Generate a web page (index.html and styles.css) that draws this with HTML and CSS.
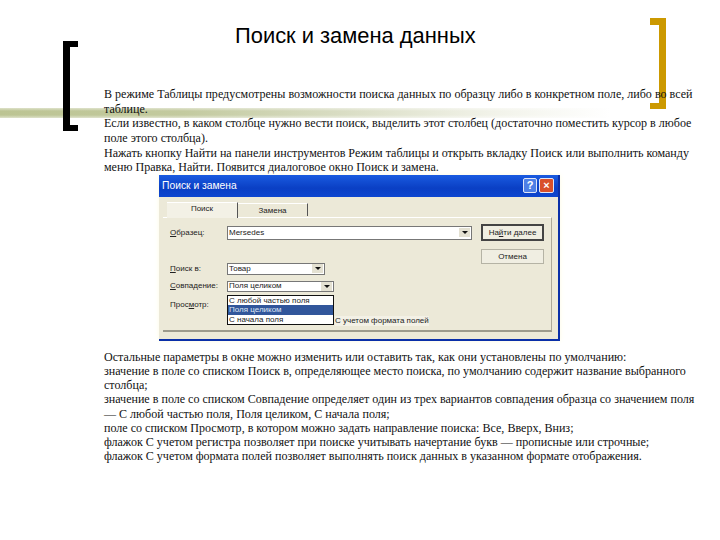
FILE: index.html
```
<!DOCTYPE html>
<html lang="ru">
<head>
<meta charset="utf-8">
<title>Поиск и замена данных</title>
<link rel="stylesheet" href="styles.css">
</head>
<body>
<main class="slide">
  <div class="rule"></div>
  <div class="bracket bracket-left"></div>
  <div class="bracket bracket-right"></div>
  <h1 class="title">Поиск и замена данных</h1>
  <p class="text">В режиме Таблицы предусмотрены возможности поиска данных по образцу либо в конкретном поле, либо во всей<br>таблице.<br>Если известно, в каком столбце нужно вести поиск, выделить этот столбец (достаточно поместить курсор в любое<br>поле этого столбца).<br>Нажать кнопку Найти на панели инструментов Режим таблицы и открыть вкладку Поиск или выполнить команду<br>меню Правка, Найти. Появится диалоговое окно Поиск и замена.</p>
  <section class="dialog">
    <header class="titlebar">
      <span>Поиск и замена</span>
      <span class="winbtns"><span class="winbtn help">?</span><span class="winbtn close">×</span></span>
    </header>
    <div class="dialog-body">
      <div class="tabs"><span class="tab active">Поиск</span><span class="tab">Замена</span></div>
      <div class="panel">
        <div class="fields">
          <div class="row row-first"><span class="label"><u>О</u>бразец:</span><span class="combo combo-wide"><span>Mersedes</span><span class="arrow"></span></span></div>
          <div class="row row-search"><span class="label"><u>П</u>оиск в:</span><span class="combo combo-a"><span>Товар</span><span class="arrow"></span></span></div>
          <div class="row row-match"><span class="label"><u>С</u>овпадение:</span><span class="combo combo-b"><span>Поля целиком</span><span class="arrow"></span></span></div>
          <div class="row row-view"><span class="label">Прос<u>м</u>отр:</span></div>
          <div class="row row-check"><span class="label"></span><span class="check">С учетом формата полей</span></div>
        </div>
        <div class="buttons"><span class="btn btn-default">На<u>й</u>ти далее</span><span class="btn">Отмена</span></div>
      </div>
      <ul class="menu"><li>С любой частью поля</li><li class="selected">Поля целиком</li><li>С начала поля</li></ul>
    </div>
  </section>
  <p class="text text-lower">Остальные параметры в окне можно изменить или оставить так, как они установлены по умолчанию:<br>значение в поле со списком Поиск в, определяющее место поиска, по умолчанию содержит название выбранного<br>столбца;<br>значение в поле со списком Совпадение определяет один из трех вариантов совпадения образца со значением поля<br>— С любой частью поля, Поля целиком, С начала поля;<br>поле со списком Просмотр, в котором можно задать направление поиска: Все, Вверх, Вниз;<br>флажок С учетом регистра позволяет при поиске учитывать начертание букв — прописные или строчные;<br>флажок С учетом формата полей позволяет выполнять поиск данных в указанном формате отображения.</p>
</main>
</body>
</html>
```
FILE: styles.css
```
html, body { margin: 0; padding: 0; background: #fff; }
.slide { position: relative; width: 720px; height: 540px; overflow: hidden; background: #fff; padding: 24px 0 0 104px; box-sizing: border-box; font-family: "Liberation Serif", serif; color: #111; }
.rule { position: absolute; left: 0; top: 108px; width: 610px; height: 10px; background: linear-gradient(180deg, rgba(255,255,255,.5), rgba(255,255,255,0) 30%, rgba(255,255,255,0) 70%, rgba(255,255,255,.5)), linear-gradient(90deg, #bcc493 0%, #c3ca9f 30%, #d8dcc2 55%, #f1f2e8 80%, #fff 100%); }
.bracket { position: absolute; border-style: solid; box-sizing: border-box; }
.bracket-left { left: 63px; top: 41px; width: 15px; height: 90px; border-color: #000; border-width: 6px 0 6px 7px; }
.bracket-right { left: 650px; top: 18px; width: 16px; height: 91px; border-color: #cc9900; border-width: 7px 7px 6px 0; }
.title { position: relative; margin: 0 0 0 131px; font: 400 21.9px/24px "Liberation Sans", sans-serif; color: #000; }
.text { position: relative; margin: 39px 0 0; font-size: 12.05px; line-height: 14.65px; white-space: nowrap; }
.text-lower { margin-top: 9px; line-height: 14.15px; }
.dialog { position: relative; margin: 0 0 0 55px; width: 401px; height: 166px; box-sizing: border-box; background: #ece9d8; border-right: 2px solid #0a2fa8; border-bottom: 2px solid #0a2fa8; box-shadow: 0 0 5px #fdfbe4; font: 8px/10px "Liberation Sans", sans-serif; color: #222; display: flex; flex-direction: column; }
.titlebar { flex: none; height: 22px; background: linear-gradient(180deg, #1a5be0, #0a3fc4 60%, #0d46d0); color: #fff; font-size: 10.3px; display: flex; align-items: center; justify-content: space-between; padding: 0 4px 0 3px; }
.winbtns { display: flex; gap: 2px; }
.winbtn { width: 14px; height: 15px; border: 1px solid #dfe6f8; border-radius: 2px; box-sizing: border-box; text-align: center; font: 700 11px/13px "Liberation Sans", sans-serif; color: #fff; background: #4d7fe6; }
.winbtn.close { width: 15px; background: #d9502a; }
.dialog-body { position: relative; flex: 1; padding: 5px 0 0 4px; }
.tabs { display: flex; height: 15px; padding-left: 4px; }
.tab { width: 70px; height: 13px; margin-top: 1px; text-align: center; line-height: 14px; border-right: 1px solid #555; border-top: 1px solid #fff; box-sizing: border-box; }
.tab.active { width: 71px; height: 16px; margin-top: 0; line-height: 11px; background: #f3f1e6; position: relative; }
.panel { display: flex; justify-content: space-between; width: 389px; height: 115px; box-sizing: border-box; padding: 8px 7px 0 7px; border-top: 1px solid #fff; border-right: 1px solid #aca899; border-bottom: 2px solid #9c9a8c; }
.fields { display: flex; flex-direction: column; }
.row { display: flex; align-items: center; height: 14px; }
.row-search { margin-top: 23px; height: 12px; }
.row-match { margin-top: 6px; height: 11px; }
.row-view { margin-top: 8px; height: 10px; }
.row-check { margin-top: 6px; height: 10px; }
.label { width: 57px; white-space: nowrap; }
.combo { display: flex; justify-content: space-between; align-items: center; height: 100%; box-sizing: border-box; background: #fff; border: 1px solid #777; padding: 0 1px; }
.combo-wide { width: 245px; }
.combo-a { width: 98px; }
.combo-b { width: 107px; }
.arrow { width: 11px; height: 9px; background: #e4e1d2; position: relative; }
.arrow::after { content: ""; position: absolute; left: 3px; top: 3px; border: 3px solid transparent; border-top-color: #111; border-bottom: 0; }
.check { margin-left: 108px; white-space: nowrap; background: #f3f1e6; }
.buttons { display: flex; flex-direction: column; gap: 8px; margin-top: -2px; }
.btn { width: 63px; height: 15px; box-sizing: border-box; text-align: center; line-height: 13px; border: 1px solid #b5b3a5; background: #f0eee2; }
.btn-default { height: 17px; border: 2px solid #444; line-height: 13px; }
.menu { position: absolute; left: 68px; top: 98px; width: 107px; height: 30px; box-sizing: border-box; margin: 0; padding: 0; list-style: none; background: #fff; border: 1px solid #111; white-space: nowrap; }
.menu li { height: 9.3px; line-height: 9.3px; padding-left: 1px; }
.menu .selected { background: #31569b; color: #dfe6f4; }
```
